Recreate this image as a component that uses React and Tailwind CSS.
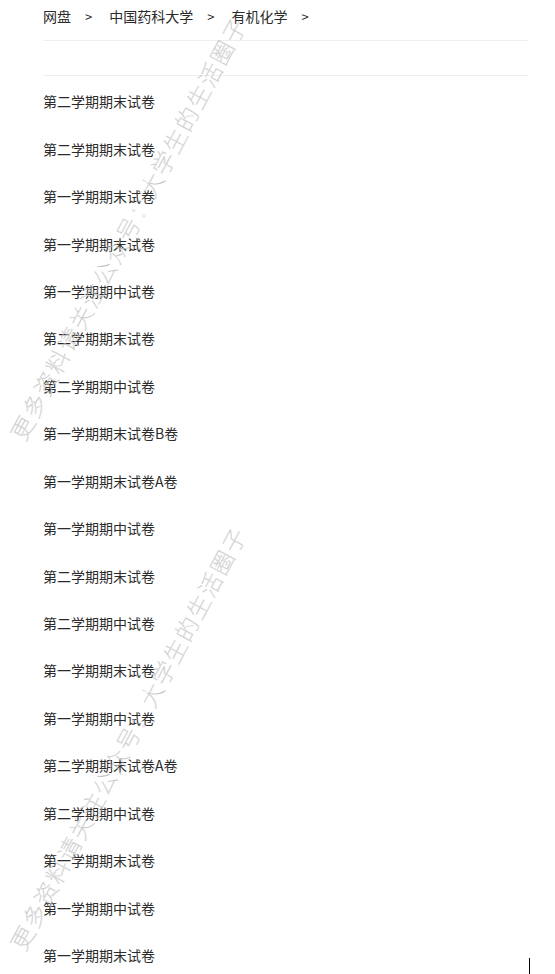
import React from 'react';

const crumbs = ['网盘', '中国药科大学', '有机化学'];

const papers = [
  '第二学期期末试卷',
  '第二学期期末试卷',
  '第一学期期末试卷',
  '第一学期期末试卷',
  '第一学期期中试卷',
  '第二学期期末试卷',
  '第二学期期中试卷',
  '第一学期期末试卷B卷',
  '第一学期期末试卷A卷',
  '第一学期期中试卷',
  '第二学期期末试卷',
  '第二学期期中试卷',
  '第一学期期末试卷',
  '第一学期期中试卷',
  '第二学期期末试卷A卷',
  '第二学期期中试卷',
  '第一学期期末试卷',
  '第一学期期中试卷',
  '第一学期期末试卷',
];

const WATERMARK = '更多资料请关注公众号：大学生的生活圈子';

// hollow diagonal watermark laid over the list
function Watermark({ className }) {
  return (
    <div className={`pointer-events-none absolute h-0 w-0 ${className}`}>
      <div className="w-max -translate-x-1/2 -translate-y-1/2 rotate-[-62deg] whitespace-nowrap text-[23px] font-thin leading-none tracking-[2px] text-transparent [-webkit-text-stroke:0.4px_#c2c2c2]">
        {WATERMARK}
      </div>
    </div>
  );
}

export default function App() {
  return (
    <div
      className="relative min-h-[974px] bg-white pl-[43px] pr-[27px] text-[14px] text-[#2b2b2b]"
      style={{ fontFamily: '"Noto Sans CJK SC", "Noto Sans", sans-serif' }}
    >
      <nav className="flex h-[41px] items-center border-b border-[#efefef] pb-[7px]">
        {crumbs.map((c) => (
          <React.Fragment key={c}>
            <span>{c}</span>
            <span className="ml-[14px] mr-[17px] text-[13px]">&gt;</span>
          </React.Fragment>
        ))}
      </nav>
      <div className="h-[35px] border-b border-[#efefef]" />

      <ul className="pt-[2px]">
        {papers.map((p, i) => (
          <li key={i} className="flex h-[47.44px] items-center">
            {p}
          </li>
        ))}
      </ul>

      <Watermark className="left-[128px] top-[228px]" />
      <Watermark className="left-[128px] top-[738px]" />

      {/* text caret */}
      <div className="absolute left-[529px] top-[958px] h-[16px] w-px bg-black" />
    </div>
  );
}
